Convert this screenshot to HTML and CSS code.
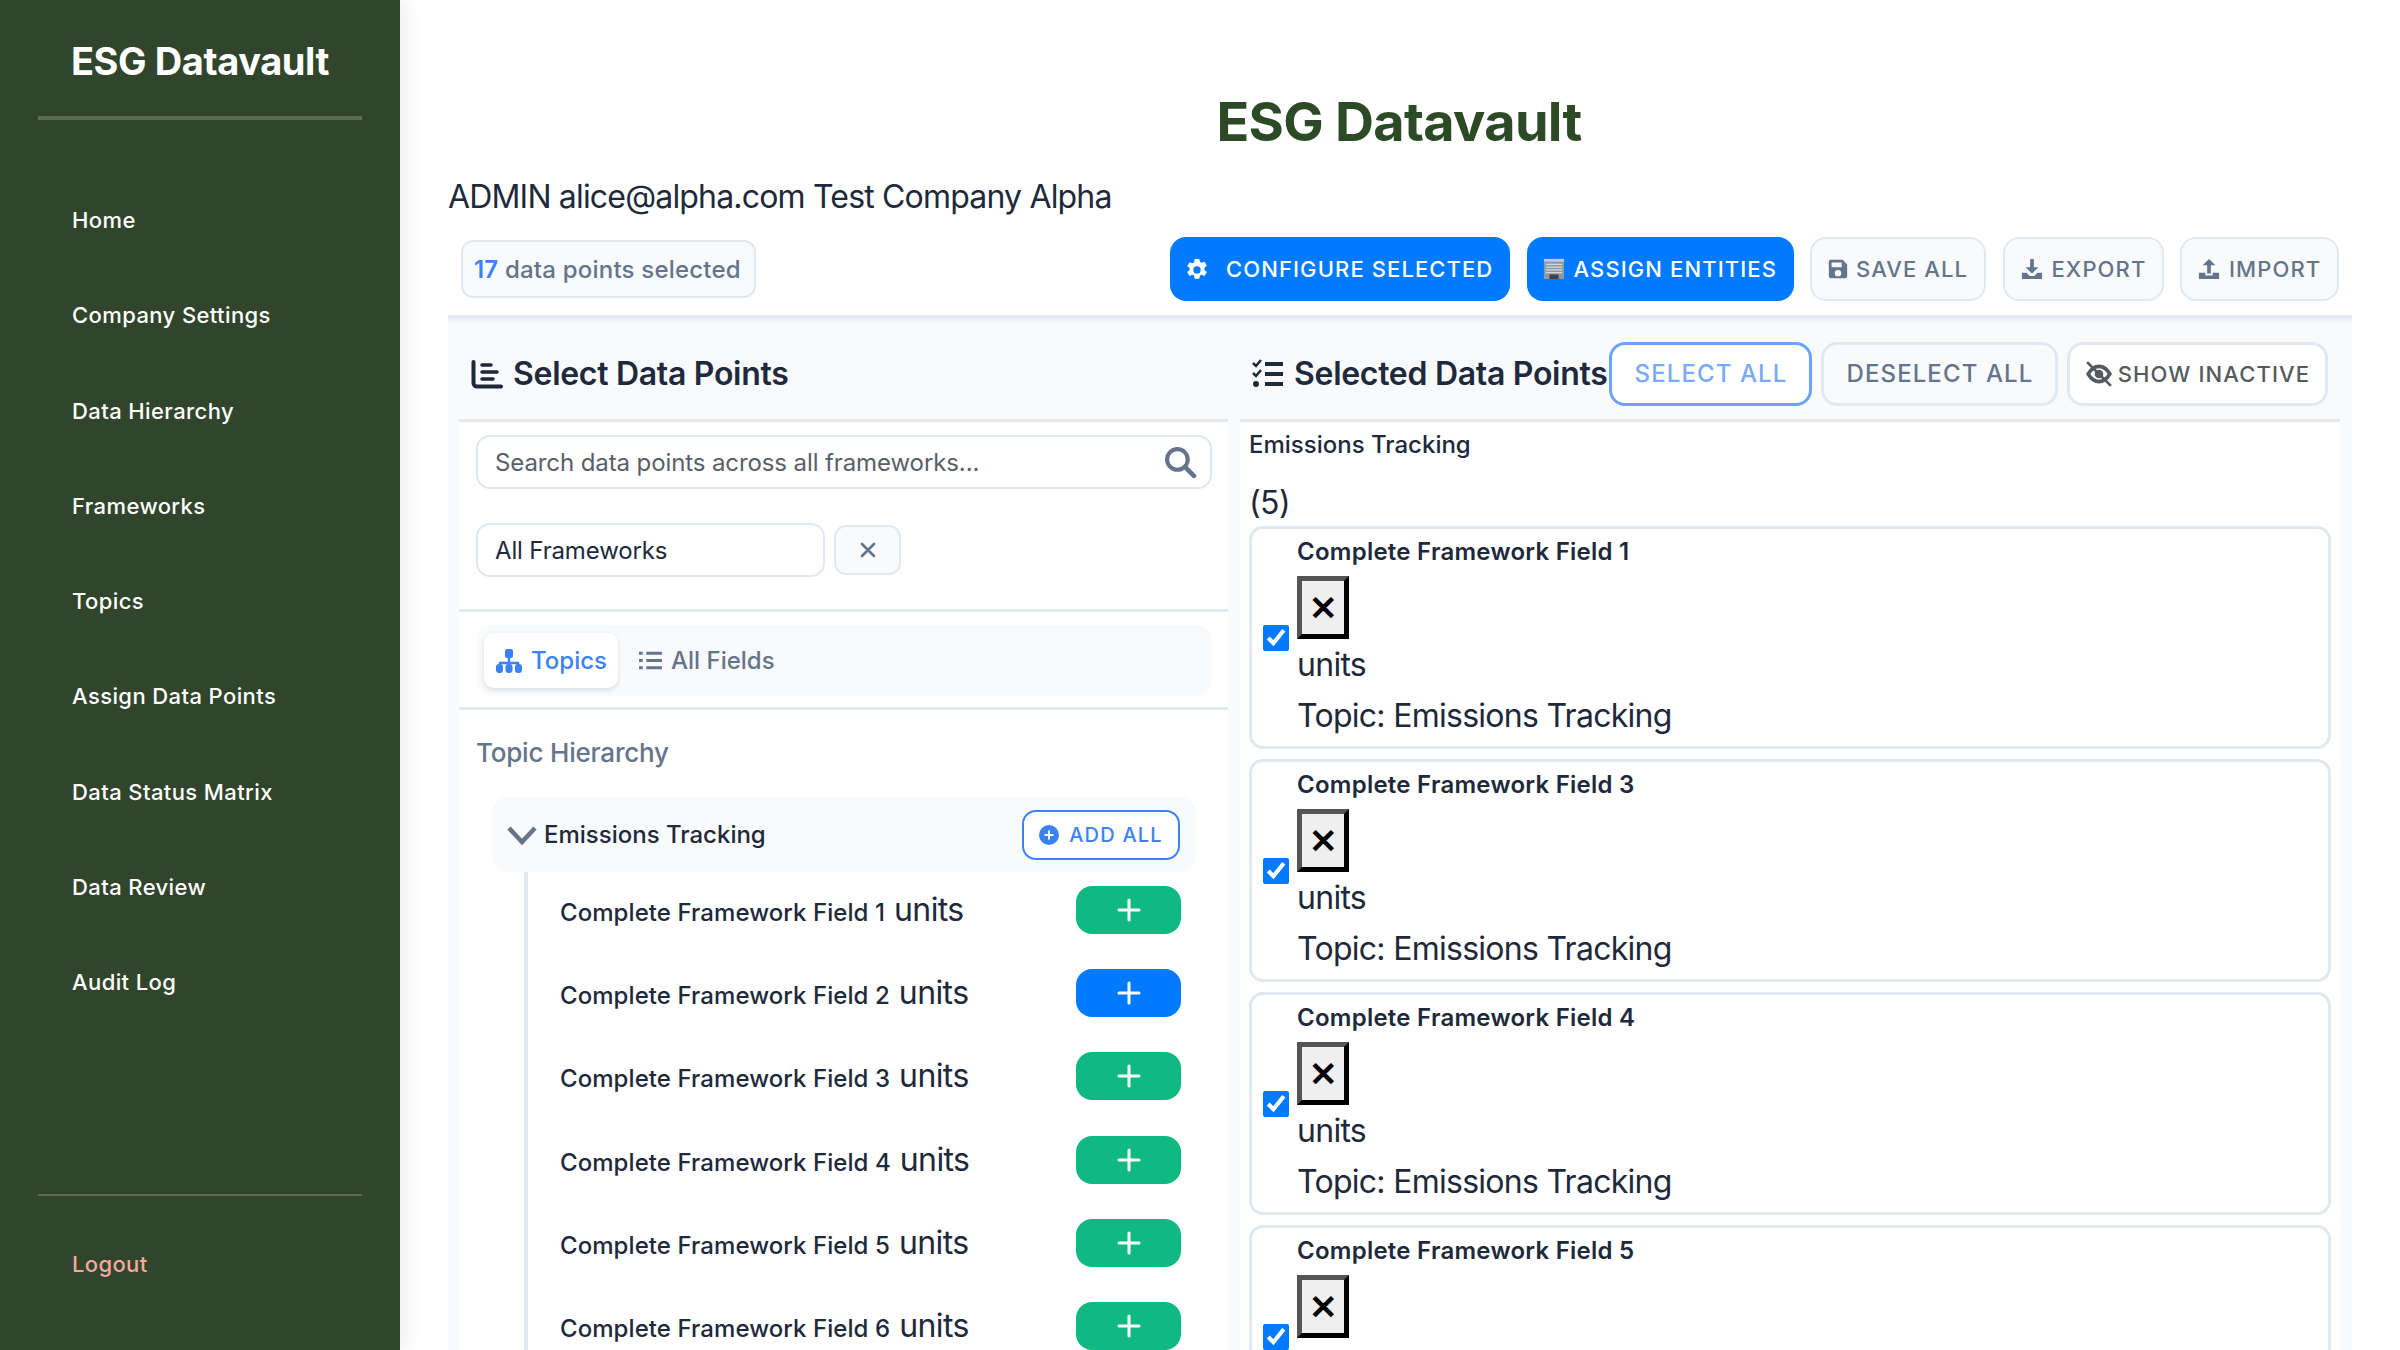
FILE: index.html
```html
<!DOCTYPE html>
<html lang="en">
<head>
<meta charset="utf-8">
<title>ESG Datavault</title>
<link rel="stylesheet" href="styles.css">
</head>
<body>
<div class="app">
  <aside class="sidebar">
    <div class="brand">ESG Datavault</div>
    <nav class="nav">
      <a class="nav-item">Home</a>
      <a class="nav-item">Company Settings</a>
      <a class="nav-item">Data Hierarchy</a>
      <a class="nav-item">Frameworks</a>
      <a class="nav-item">Topics</a>
      <a class="nav-item">Assign Data Points</a>
      <a class="nav-item">Data Status Matrix</a>
      <a class="nav-item">Data Review</a>
      <a class="nav-item">Audit Log</a>
    </nav>
    <div class="side-foot"><a class="logout">Logout</a></div>
  </aside>
  <main class="main">
    <h1 class="title">ESG Datavault</h1>
    <p class="userline">ADMIN alice@alpha.com Test Company Alpha</p>
    <div class="toolbar">
      <div class="count"><b>17</b> data points selected</div>
      <div class="actions">
        <button class="btn primary w-config"><svg class="ic" viewBox="0 0 24 24"><path fill="currentColor" fill-rule="evenodd" d="M9.500 0h5l.8 3.400 1.700.9 3.200-1.300 2.500 4.300-2.600 2.200v2.500l2.600 2.200-2.500 4.300-3.200-1.300-1.700.9-.8 3.400h-5l-.8-3.400-1.700-.9-3.200 1.300L1.300 14.200l2.600-2.200V10L1.300 7.800 3.800 3.500 7 4.800l1.700-.9zM12 8a4 4 0 1 0 0 8 4 4 0 0 0 0-8z" transform="translate(0 1)"/></svg><span>CONFIGURE SELECTED</span></button>
        <button class="btn primary w-assign"><svg class="ic" viewBox="0 0 24 24"><rect x="1" y="3" width="22" height="20" fill="#8d9aa3"/><rect x="1" y="1" width="22" height="3" fill="#c2cbd1"/><path d="M3 7h18M3 10h18M3 13h18M3 16h18" stroke="#d3dbe0" stroke-width="1.400"/><rect x="7" y="18" width="10" height="5" fill="#3c4349"/></svg><span>ASSIGN ENTITIES</span></button>
        <button class="btn ghost w-save"><svg class="ic" viewBox="0 0 24 24"><path fill="currentColor" fill-rule="evenodd" d="M4 2h13l5 5v13a2 2 0 0 1-2 2H4a2 2 0 0 1-2-2V4a2 2 0 0 1 2-2zm1 3v5h11V5zm7 8a3.500 3.500 0 1 0 0 7 3.500 3.500 0 0 0 0-7z"/></svg><span>SAVE ALL</span></button>
        <button class="btn ghost w-export"><svg class="ic" viewBox="0 0 24 24"><path fill="currentColor" d="M10 1h4v9h5l-7 7-7-7h5zM1 16h5l3.500 3.500h5L18 16h5v7H1z"/></svg><span>EXPORT</span></button>
        <button class="btn ghost w-import"><svg class="ic" viewBox="0 0 24 24"><path fill="currentColor" d="M12 1l7 7h-5v9h-4V8H5zM1 16h7v3h8v-3h7v7H1z"/></svg><span>IMPORT</span></button>
      </div>
    </div>
    <div class="panels">
      <section class="panel left">
        <header class="panel-head">
          <svg class="head-ic" viewBox="0 0 32 30"><path fill="none" stroke="currentColor" stroke-width="4" stroke-linecap="round" d="M2.500 3v21a3.500 3.500 0 0 0 3.500 3.500h24"/><path fill="none" stroke="currentColor" stroke-width="3.500" stroke-linecap="round" d="M11 6h9M11 13h15M11 20h11"/></svg>
          <h2 class="panel-title">Select Data Points</h2>
        </header>
        <div class="filters">
          <div class="search">
            <span class="placeholder">Search data points across all frameworks...</span>
            <svg class="search-ic" viewBox="0 0 32 32"><circle cx="13" cy="13" r="10" fill="none" stroke="currentColor" stroke-width="4"/><path d="M20.500 20.500L29 29" stroke="currentColor" stroke-width="4.500" stroke-linecap="round"/></svg>
          </div>
          <div class="fw-row">
            <div class="select">All Frameworks</div>
            <button class="clear"><svg class="clear-ic" viewBox="0 0 16 16"><path d="M2 2l12 12M14 2L2 14" stroke="currentColor" stroke-width="2.600" stroke-linecap="round"/></svg></button>
          </div>
        </div>
        <div class="tabs-wrap">
          <div class="tabs">
            <div class="tab active"><svg class="ic tree-ic" viewBox="0 0 28 24"><rect x="10" y="0" width="8" height="9" rx="2" fill="currentColor"/><path d="M14 8v6M5 17v-3h18v3" fill="none" stroke="currentColor" stroke-width="2.400"/><rect x="1" y="15" width="7" height="9" rx="3" fill="currentColor"/><rect x="10.500" y="15" width="7" height="9" rx="3" fill="currentColor"/><rect x="20" y="15" width="7" height="9" rx="3" fill="currentColor"/></svg>Topics</div>
            <div class="tab"><svg class="ic list-ic" viewBox="0 0 24 24"><path fill="none" stroke="currentColor" stroke-width="3" d="M8 5h15M8 12h15M8 19h15M1 5h3.500M1 12h3.500M1 19h3.500"/></svg>All Fields</div>
          </div>
        </div>
        <div class="tree">
          <h3 class="tree-title">Topic Hierarchy</h3>
          <div class="topic">
            <svg class="chev" viewBox="0 0 30 20"><path d="M2 3l13 14L28 3" fill="none" stroke="currentColor" stroke-width="4.500"/></svg>
            <span class="topic-name">Emissions Tracking</span>
            <button class="addall"><svg class="ic-s" viewBox="0 0 20 20"><circle cx="10" cy="10" r="10" fill="currentColor"/><path d="M10 5.500v9M5.500 10h9" stroke="#fff" stroke-width="2"/></svg>ADD ALL</button>
          </div>
          <ul class="fields">
            <li class="field"><span class="f-name">Complete Framework Field 1</span><span class="f-unit">units</span><button class="plus green"><svg class="plus-ic" viewBox="0 0 24 24"><path d="M12 2v20M2 12h20" stroke="#fff" stroke-width="3" stroke-linecap="round"/></svg></button></li>
            <li class="field"><span class="f-name">Complete Framework Field 2</span><span class="f-unit">units</span><button class="plus blue"><svg class="plus-ic" viewBox="0 0 24 24"><path d="M12 2v20M2 12h20" stroke="#fff" stroke-width="3" stroke-linecap="round"/></svg></button></li>
            <li class="field"><span class="f-name">Complete Framework Field 3</span><span class="f-unit">units</span><button class="plus green"><svg class="plus-ic" viewBox="0 0 24 24"><path d="M12 2v20M2 12h20" stroke="#fff" stroke-width="3" stroke-linecap="round"/></svg></button></li>
            <li class="field"><span class="f-name">Complete Framework Field 4</span><span class="f-unit">units</span><button class="plus green"><svg class="plus-ic" viewBox="0 0 24 24"><path d="M12 2v20M2 12h20" stroke="#fff" stroke-width="3" stroke-linecap="round"/></svg></button></li>
            <li class="field"><span class="f-name">Complete Framework Field 5</span><span class="f-unit">units</span><button class="plus green"><svg class="plus-ic" viewBox="0 0 24 24"><path d="M12 2v20M2 12h20" stroke="#fff" stroke-width="3" stroke-linecap="round"/></svg></button></li>
            <li class="field"><span class="f-name">Complete Framework Field 6</span><span class="f-unit">units</span><button class="plus green"><svg class="plus-ic" viewBox="0 0 24 24"><path d="M12 2v20M2 12h20" stroke="#fff" stroke-width="3" stroke-linecap="round"/></svg></button></li>
          </ul>
        </div>
      </section>
      <section class="panel right">
        <header class="panel-head tight">
          <svg class="head-ic" viewBox="0 0 32 30"><path fill="none" stroke="currentColor" stroke-width="4" d="M13 5h18M13 15h18M13 25h18"/><path fill="none" stroke="currentColor" stroke-width="2.500" d="M1 4l3 3 5-6M1 14l3 3 5-6"/><circle cx="4" cy="25" r="3" fill="currentColor"/></svg>
          <h2 class="panel-title">Selected Data Points</h2>
          <div class="head-btns">
            <button class="hbtn sel">SELECT ALL</button>
            <button class="hbtn desel">DESELECT ALL</button>
            <button class="hbtn inact"><svg class="ic eye-ic" viewBox="0 0 24 24"><path fill="none" stroke="currentColor" stroke-width="3.400" d="M2 12c3-5 6.500-7 10-7s7 2 10 7c-3 5-6.500 7-10 7s-7-2-10-7z"/><circle cx="12" cy="12" r="4" fill="currentColor"/><path d="M1 1l22 22" stroke="currentColor" stroke-width="2.500"/></svg>SHOW INACTIVE</button>
          </div>
        </header>
        <div class="selected">
          <div class="group-name">Emissions Tracking</div>
          <div class="group-count">(5)</div>
          <article class="card"><input class="chk" type="checkbox" checked><div class="card-body"><div class="card-title">Complete Framework Field 1</div><button class="broken">✕</button><div class="card-line">units</div><div class="card-line">Topic: Emissions Tracking</div></div></article>
          <article class="card"><input class="chk" type="checkbox" checked><div class="card-body"><div class="card-title">Complete Framework Field 3</div><button class="broken">✕</button><div class="card-line">units</div><div class="card-line">Topic: Emissions Tracking</div></div></article>
          <article class="card"><input class="chk" type="checkbox" checked><div class="card-body"><div class="card-title">Complete Framework Field 4</div><button class="broken">✕</button><div class="card-line">units</div><div class="card-line">Topic: Emissions Tracking</div></div></article>
          <article class="card"><input class="chk" type="checkbox" checked><div class="card-body"><div class="card-title">Complete Framework Field 5</div><button class="broken">✕</button></div></article>
        </div>
      </section>
    </div>
  </main>
</div>
</body>
</html>
```
FILE: styles.css
```css
* { box-sizing: border-box; }
html, body { margin: 0; height: 100%; overflow: hidden; background: #fff; }
body { font-family: Inter, "Liberation Sans", sans-serif; color: #1e293b; }
button { font-family: inherit; cursor: pointer; }
.app { display: flex; height: 1350px; overflow: hidden; }

.sidebar { width: 400px; flex: none; height: 1350px; background: #30452b; color: #fff; display: flex; flex-direction: column; padding: 0 38px; box-shadow: 4px 0 20px rgba(0,0,0,.08); position: relative; z-index: 2; }
.brand { height: 120px; padding-top: 37px; border-bottom: 4px solid #596b54; text-align: center; font-size: 38px; line-height: 48px; font-weight: 700; letter-spacing: -.4px; }
.nav { display: flex; flex-direction: column; padding-top: 52.5px; }
.nav-item { height: 95.25px; display: flex; align-items: center; padding-left: 34px; font-size: 22px; font-weight: 500; letter-spacing: .4px; }
.side-foot { margin-top: auto; height: 156px; border-top: 2px solid #596b54; padding: 53px 0 0 34px; }
.logout { font-size: 22px; font-weight: 500; color: #f8a8a0; line-height: 30px; letter-spacing: .35px; }

.main { flex: 1; min-width: 0; padding: 88px 48px 0; }
.title { margin: 0; padding-right: 2px; text-align: center; font-size: 54px; line-height: 68px; font-weight: 700; color: #2d4a27; letter-spacing: -.7px; }
.userline { margin: 18px 0 0; font-size: 32px; line-height: 46px; letter-spacing: -.82px; color: #1e293b; }

.toolbar { display: flex; align-items: center; justify-content: space-between; padding: 0 13px; margin-top: 17px; height: 64px; }
.count { height: 58px; width: 295px; background: #f8fafc; border: 2px solid #e2e8f0; border-radius: 12px; display: flex; align-items: center; padding-left: 11px; font-size: 24px; font-weight: 500; letter-spacing: .2px; color: #64748b; white-space: pre; }
.count b { color: #3b82f6; font-weight: 600; }
.actions { display: flex; gap: 16.500px; }
.btn { height: 64px; border-radius: 16px; padding: 0 0 0 16px; font-size: 22px; font-weight: 500; letter-spacing: 1.100px; display: flex; align-items: center; gap: 9px; white-space: nowrap; border: 0; }
.btn.primary { background: #007bff; color: #fff; }
.btn.ghost { background: #f8fafc; color: #64748b; border: 2px solid #e2e8f0; padding-left: 16px; }
.btn.w-config { width: 340px; gap: 18px; }
.btn.w-assign { width: 267px; }
.btn.w-save { width: 176px; padding-left: 15px; gap: 7px; }
.btn.w-export { width: 161px; }
.btn.w-import { width: 159px; }
.ic { width: 22px; height: 22px; flex: none; }
.tree-ic { width: 28px; height: 24px; }
.list-ic { width: 25px; height: 25px; }
.eye-ic { width: 26px; height: 26px; }

.panels { display: flex; gap: 12px; margin-top: 14px; padding: 10px 12px 0 11px; border-top: 3px solid #e2e8f0; box-shadow: inset 0 6px 6px -6px rgba(100,116,139,.2); background: #f8fafc; height: 1100px; }
.panel { background: #fff; border-radius: 16px 16px 0 0; overflow: hidden; }
.panel.left { width: 769px; flex: none; }
.panel.right { flex: 1; min-width: 0; }
.panel-head { height: 94px; background: #f8fafc; border-bottom: 3px solid #e2e8f0; display: flex; align-items: center; padding: 0 12px; }
.panel-head.tight { padding: 0 12px 0 12px; }
.head-ic { width: 32px; height: 30px; flex: none; color: #1e293b; margin-right: 10px; }
.panel-title { margin: 0; font-size: 32px; font-weight: 600; color: #1e293b; white-space: nowrap; letter-spacing: -.3px; }
.head-btns { display: flex; gap: 9px; margin-left: 2px; }
.hbtn { height: 64px; border-radius: 16px; background: #f8fafc; border: 3px solid #e2e8f0; font-size: 24px; font-weight: 500; letter-spacing: 1.100px; color: #64748b; display: flex; align-items: center; gap: 6px; justify-content: center; white-space: nowrap; padding: 0; }
.hbtn.sel { width: 203px; color: #7aa9f7; border-color: #69a3fa; background: #fff; }
.hbtn.desel { width: 237px; }
.hbtn.inact { width: 261px; background: #fff; color: #555a60; font-size: 22px; letter-spacing: 1.100px; }

.filters { padding: 13px 16px 32px 17px; border-bottom: 3px solid #e2e8f0; }
.search { height: 54px; border: 2px solid #e2e8f0; border-radius: 14px; display: flex; align-items: center; justify-content: space-between; padding: 0 13px 0 17px; }
.placeholder { font-size: 24px; color: #596069; letter-spacing: -.1px; }
.search-ic { width: 33px; height: 33px; color: #64748b; }
.fw-row { display: flex; align-items: center; gap: 9px; margin-top: 34px; }
.select { width: 349px; height: 54px; border: 2px solid #e2e8f0; border-radius: 14px; display: flex; align-items: center; padding-left: 17px; font-size: 24px; letter-spacing: -.15px; color: #1e293b; }
.clear { width: 67px; height: 50px; border: 2px solid #e2e8f0; border-radius: 12px; background: #f8fafc; color: #64748b; display: flex; align-items: center; justify-content: center; padding: 0; }
.clear-ic { width: 16px; height: 16px; }
.tabs-wrap { padding: 13px 16px 11px 18px; border-bottom: 3px solid #e2e8f0; }
.tabs { height: 71px; background: #f8fafc; border-radius: 16px; display: flex; align-items: center; padding-left: 7px; gap: 20px; }
.tab { height: 55px; display: flex; align-items: center; gap: 8px; font-size: 24px; font-weight: 500; color: #64748b; border-radius: 10px; }
.tab.active { width: 134px; justify-content: center; background: #fff; color: #3b82f6; box-shadow: 0 2px 5px rgba(0,0,0,.12); }

.tree { padding: 24px 32px 0 17px; }
.tree-title { margin: 0; font-size: 26px; line-height: 38px; font-weight: 500; letter-spacing: -.2px; color: #64748b; }
.topic { height: 75px; margin: 25px 0 0 16px; padding: 0 16px 0 15px; background: #f8fafc; border-radius: 16px; display: flex; align-items: center; gap: 7px; }
.chev { width: 30px; height: 20px; color: #64748b; flex: none; }
.topic-name { font-size: 24px; font-weight: 500; }
.addall { margin-left: auto; width: 158px; height: 50px; background: #fff; color: #3b82f6; border: 2.500px solid #3b82f6; border-radius: 14px; display: flex; align-items: center; justify-content: center; gap: 10px; font-size: 20px; font-weight: 500; letter-spacing: 1.200px; padding: 0; }
.ic-s { width: 20px; height: 20px; }
.fields { list-style: none; margin: 0 0 0 48px; padding: 14px 0 0 32px; border-left: 4px solid #e2e8f0; height: 700px; }
.field { height: 83.200px; display: flex; align-items: flex-start; white-space: pre; padding-right: 15px; }
.f-name { font-size: 24px; font-weight: 500; letter-spacing: .07px; line-height: 48px; margin-top: 3px; }
.f-unit { font-size: 32px; line-height: 46px; letter-spacing: -.6px; margin: 1px 0 0 9px; }
.plus { margin-left: auto; width: 105px; height: 48px; border: 0; border-radius: 16px; display: flex; align-items: center; justify-content: center; padding: 0; }
.plus.green { background: #10b981; }
.plus.blue { background: #007bff; }
.plus-ic { width: 24px; height: 24px; }

.selected { padding: 5px 9px 0 9px; }
.group-name { font-size: 24px; font-weight: 500; line-height: 36px; }
.group-count { font-size: 32px; line-height: 46px; letter-spacing: -.6px; margin-top: 17px; }
.card { height: 223px; margin-bottom: 10px; border: 3px solid #e2e8f0; border-radius: 14px; display: flex; align-items: center; padding-left: 11px; }
.chk { width: 26px; height: 26px; margin: 0 8px 0 0; flex: none; accent-color: #007bff; }
.card-body { flex: 1; align-self: flex-start; padding-top: 5px; }
.card-title { font-size: 24px; font-weight: 600; letter-spacing: .25px; line-height: 36px; }
.broken { display: block; width: 52px; height: 63px; margin-top: 6px; padding: 0; background: #efefef; color: #000; font-size: 34px; font-weight: 700; line-height: 1; border: 5px solid; border-color: #555 #000 #000 #555; }
.card-line { font-size: 32px; line-height: 51px; letter-spacing: -.72px; color: #1e293b; }
```
